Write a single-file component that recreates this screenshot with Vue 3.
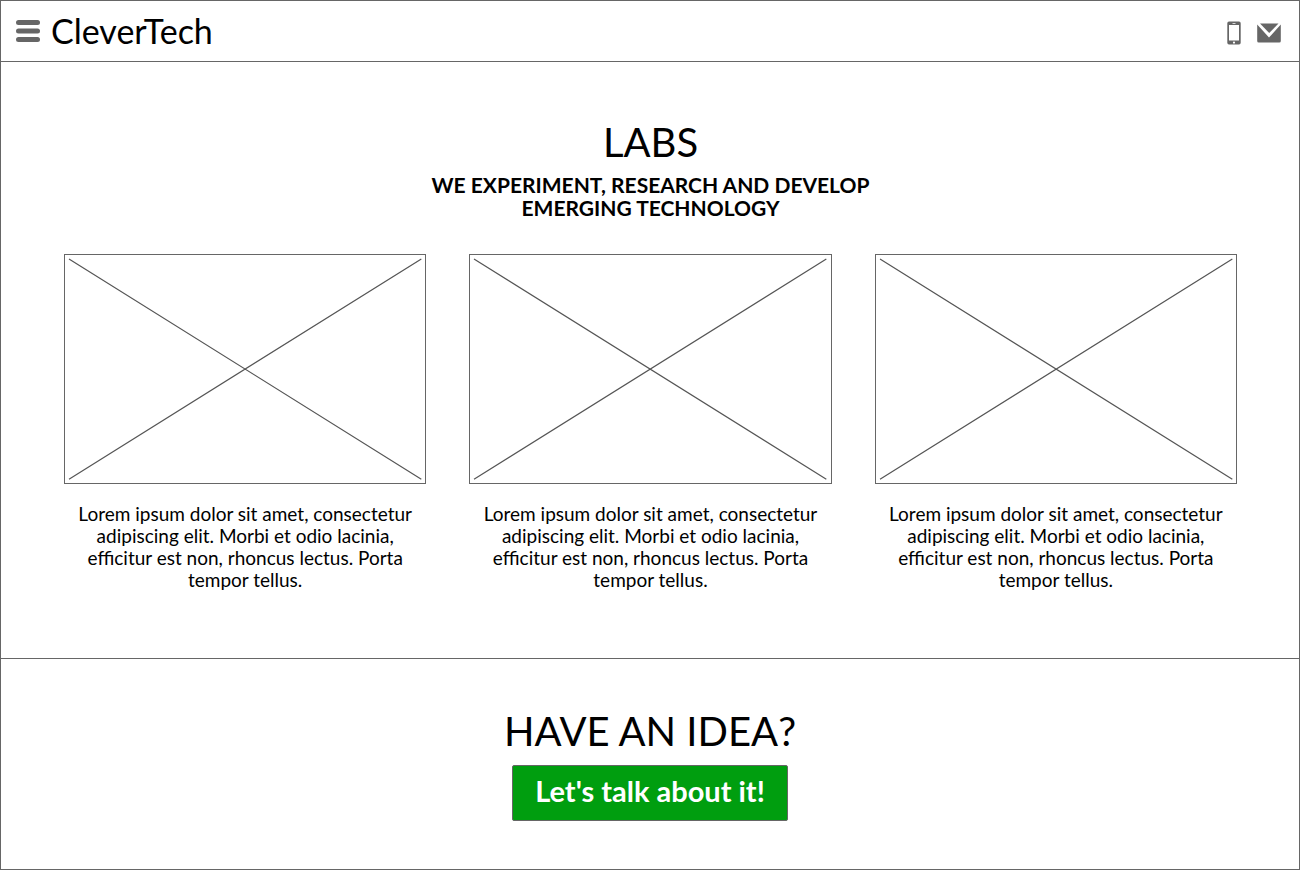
<script setup>
const projects = [1, 2, 3]
const blurb =
  'Lorem ipsum dolor sit amet, consectetur adipiscing elit. Morbi et odio lacinia, efficitur est non, rhoncus lectus. Porta tempor tellus.'
</script>

<template>
  <div class="page">
    <header class="bar">
      <button class="icon-button" type="button" aria-label="Menu">
        <svg width="24" height="22" viewBox="0 0 24 22" fill="#666">
          <rect width="24" height="5" rx="2.5" />
          <rect y="8.5" width="24" height="5" rx="2.5" />
          <rect y="17" width="24" height="5" rx="2.5" />
        </svg>
      </button>
      <a class="brand" href="#">CleverTech</a>
      <nav class="contact">
        <a href="#" aria-label="Phone">
          <svg width="14" height="24" viewBox="0 0 14 24">
            <path
              fill="#666"
              fill-rule="evenodd"
              d="M2 .5h10a1.700 1.700 0 0 1 1.700 1.700v19.600a1.700 1.700 0 0 1-1.700 1.700H2a1.700 1.700 0 0 1-1.700-1.700V2.200A1.700 1.700 0 0 1 2 .5zM2 4v15.500h10V4zM5.500 2v.8h3V2zM7 20.500a1.100 1.100 0 1 0 0 2.200a1.100 1.100 0 0 0 0-2.200z"
            />
          </svg>
        </a>
        <a href="#" aria-label="Email">
          <svg width="24" height="20" viewBox="0 0 24 20" fill="#666">
            <path d="M3 .5h18.500l-9.300 9.500z" />
            <path d="M.2 1.500L12 14.500L23.800 1.500V18a1.500 1.500 0 0 1-1.500 1.500H1.700A1.500 1.500 0 0 1 .2 18z" />
          </svg>
        </a>
      </nav>
    </header>

    <main>
      <section class="labs">
        <h1 class="title">LABS</h1>
        <p class="subtitle">WE EXPERIMENT, RESEARCH AND DEVELOP EMERGING TECHNOLOGY</p>
        <div class="cards">
          <article v-for="project in projects" :key="project" class="card">
            <svg class="placeholder" viewBox="0 0 360 228" role="img" aria-label="Project image">
              <path d="M4 4L356 224M356 4L4 224" />
            </svg>
            <p class="blurb">{{ blurb }}</p>
          </article>
        </div>
      </section>

      <section class="idea">
        <h2 class="title">HAVE AN IDEA?</h2>
        <button class="cta" type="button">Let's talk about it!</button>
      </section>
    </main>
  </div>
</template>

<style>
body {
  margin: 0;
  background: #fff;
}
</style>

<style scoped>
.page {
  box-sizing: border-box;
  min-height: 100vh;
  border: 1px solid #666;
  color: #000;
  font-family: Lato, "Open Sans", sans-serif;
}

.bar {
  display: flex;
  align-items: center;
  height: 60px;
  padding: 0 18px 0 15px;
  border-bottom: 1px solid #666;
}

.icon-button {
  display: flex;
  padding: 0;
  border: 0;
  background: none;
}

.brand {
  margin-left: 11px;
  color: inherit;
  font-size: 34px;
  line-height: 40px;
  text-decoration: none;
}

.contact {
  display: flex;
  align-items: center;
  gap: 16px;
  margin-left: auto;
  padding-top: 4px;
}

.contact a {
  display: flex;
}

.labs {
  padding: 56px 62px 67px 63px;
  border-bottom: 1px solid #666;
  text-align: center;
}

.title {
  margin: 0;
  font-size: 40px;
  font-weight: 400;
  line-height: 48px;
}

.subtitle {
  max-width: 480px;
  margin: 7px auto 35px;
  font-size: 21px;
  font-weight: 700;
  line-height: 23px;
}

.cards {
  display: grid;
  grid-template-columns: repeat(3, 1fr);
  gap: 43px;
}

.placeholder {
  box-sizing: border-box;
  display: block;
  width: 100%;
  border: 1px solid #666;
  fill: none;
  stroke: #555;
  stroke-width: 1.2;
}

.blurb {
  margin: 19px 12px 0;
  font-size: 19px;
  line-height: 22px;
}

.idea {
  padding: 48px 62px 47px;
  text-align: center;
}

.cta {
  display: block;
  margin: 10px auto 0;
  padding: 0 22px 4px;
  border: 1px solid #666;
  border-radius: 2px;
  background: #009e0f;
  color: #fff;
  font-family: inherit;
  font-size: 29px;
  font-weight: 700;
  line-height: 50px;
}
</style>
